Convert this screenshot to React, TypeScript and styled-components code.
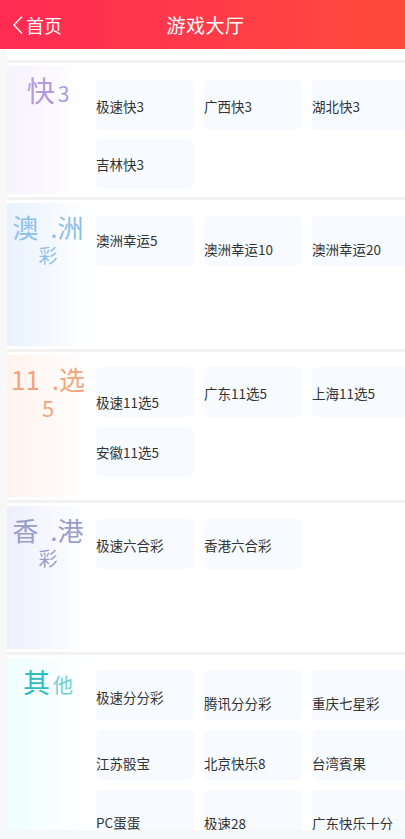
import React from "react";
import styled, { createGlobalStyle } from "styled-components";

const GlobalStyle = createGlobalStyle`
  html, body {
    margin: 0;
    padding: 0;
    background: #f8f8f8;
    overflow-x: hidden;
    font-family: "Noto Sans CJK SC", "Noto Sans", sans-serif;
  }
`;

const Header = styled.div`
  height: 49px;
  display: flex;
  align-items: center;
  justify-content: center;
  position: relative;
  background: linear-gradient(90deg, #ff2b53 0%, #ff3a49 50%, #ff4b3b 100%);
  color: #fff;
`;

const Back = styled.div`
  position: absolute;
  left: 12px;
  top: 0;
  height: 49px;
  display: flex;
  align-items: center;
  font-size: 18px;
  gap: 2px;
`;

const Title = styled.div`
  font-size: 19px;
  margin-left: 6px;
  letter-spacing: 0.5px;
`;

const Main = styled.div`
  margin-left: 7px;
  width: 410px;
  background: #fff;
  padding-top: 11px;
`;

const Section = styled.div`
  border-top: 3px solid #f2f2f2;
  padding: 3px 0;
  display: flex;
`;

interface LabelProps {
  $tint: string;
  $h: number;
}
const Label = styled.div<LabelProps>`
  flex: 0 0 82px;
  height: ${(p) => p.$h}px;
  background: linear-gradient(90deg, ${(p) => p.$tint} 0%, #ffffff 100%);
  display: flex;
  flex-direction: column;
  align-items: center;
  padding-top: 9px;
  box-sizing: border-box;
  white-space: nowrap;
`;

const Line = styled.div<{ $color: string; $size: number; $lh?: number }>`
  color: ${(p) => p.$color};
  font-size: ${(p) => p.$size}px;
  line-height: ${(p) => p.$lh ?? 30}px;
  word-spacing: 6px;
`;

const Small = styled.span<{ $color: string; $size: number }>`
  color: ${(p) => p.$color};
  font-size: ${(p) => p.$size}px;
  margin-left: 3px;
`;

const Grid = styled.div<{ $top: number; $rowGap: number }>`
  display: grid;
  grid-template-columns: repeat(3, 98px);
  column-gap: 10px;
  row-gap: ${(p) => p.$rowGap}px;
  align-content: start;
  margin-left: 7px;
  padding-top: ${(p) => p.$top}px;
`;

const Cell = styled.div<{ $offset: number }>`
  height: 50px;
  box-sizing: border-box;
  background: #f7fbff;
  border-radius: 5px;
  padding-top: ${(p) => p.$offset - 9}px;
  font-size: 13.5px;
  line-height: 18px;
  color: #333;
  white-space: nowrap;
`;

const Footer = styled.div`
  position: fixed;
  left: 0;
  right: 0;
  bottom: 0;
  height: 9px;
  background: #f6f7f9;
`;

type Game = [string, number];

interface SectionData {
  tint: string;
  h: number;
  top: number;
  rowGap: number;
  label: React.ReactNode;
  games: Game[];
}

const sections: SectionData[] = [
  {
    tint: "#f7f2ff",
    h: 128,
    top: 14,
    rowGap: 9,
    label: (
      <Line $color="#b39bdb" $size={28}>
        快<Small $color="#a3a0e2" $size={21}>3</Small>
      </Line>
    ),
    games: [
      ["极速快3", 26],
      ["广西快3", 26],
      ["湖北快3", 26],
      ["吉林快3", 25],
    ],
  },
  {
    tint: "#e8f2fe",
    h: 143,
    top: 13,
    rowGap: 10,
    label: (
      <>
        <Line $color="#8fc0e8" $size={26}>澳 .洲</Line>
        <Line $color="#8fc0e8" $size={19} $lh={26}>彩</Line>
      </>
    ),
    games: [
      ["澳洲幸运5", 24],
      ["澳洲幸运10", 33],
      ["澳洲幸运20", 33],
    ],
  },
  {
    tint: "#fff3ec",
    h: 142,
    top: 12,
    rowGap: 10,
    label: (
      <>
        <Line $color="#f2a67d" $size={26}>11 .选</Line>
        <Line $color="#f2a67d" $size={22} $lh={26}>5</Line>
      </>
    ),
    games: [
      ["极速11选5", 35],
      ["广东11选5", 26],
      ["上海11选5", 26],
      ["安徽11选5", 25],
    ],
  },
  {
    tint: "#edeffe",
    h: 143,
    top: 13,
    rowGap: 10,
    label: (
      <>
        <Line $color="#9a9dca" $size={26}>香 .港</Line>
        <Line $color="#9a9dca" $size={19} $lh={26}>彩</Line>
      </>
    ),
    games: [
      ["极速六合彩", 26],
      ["香港六合彩", 26],
    ],
  },
  {
    tint: "#effefe",
    h: 200,
    top: 12,
    rowGap: 10,
    label: (
      <Line $color="#2ebdc1" $size={27}>
        其<Small $color="#72d0d3" $size={20}>他</Small>
      </Line>
    ),
    games: [
      ["极速分分彩", 27],
      ["腾讯分分彩", 33],
      ["重庆七星彩", 33],
      ["江苏骰宝", 33],
      ["北京快乐8", 33],
      ["台湾賓果", 33],
      ["PC蛋蛋", 32],
      ["极速28", 33],
      ["广东快乐十分", 33],
    ],
  },
];

const App: React.FC = () => {
  return (
    <>
      <GlobalStyle />
      <Header>
        <Back>
          <svg width="12" height="20" viewBox="0 0 12 20">
            <path d="M10 1.5 L2 10 L10 18.5" fill="none" stroke="#fff" strokeWidth="1.4" />
          </svg>
          <span>首页</span>
        </Back>
        <Title>游戏大厅</Title>
      </Header>
      <Main>
        {sections.map((s, i) => (
          <Section key={i}>
            <Label $tint={s.tint} $h={s.h}>
              {s.label}
            </Label>
            <Grid $top={s.top} $rowGap={s.rowGap}>
              {s.games.map(([name, off]) => (
                <Cell key={name} $offset={off}>
                  {name}
                </Cell>
              ))}
            </Grid>
          </Section>
        ))}
      </Main>
      <Footer />
    </>
  );
};

export default App;
